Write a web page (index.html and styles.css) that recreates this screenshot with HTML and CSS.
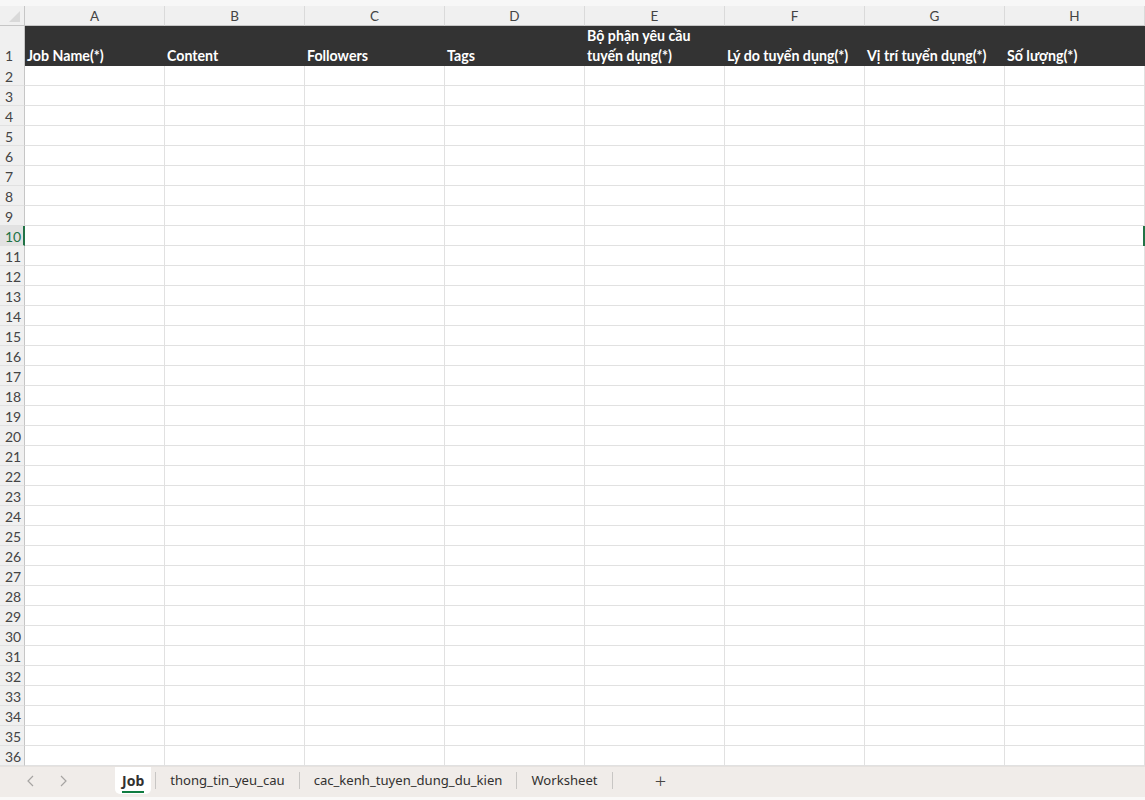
FILE: index.html
```html
<!DOCTYPE html>
<html lang="vi">
<head>
    <meta charset="UTF-8">
    <title>Job</title>
    <link rel="stylesheet" href="styles.css">
</head>
<body>
    <div class="sheet">
        <div class="top-strip"></div>
        <div class="grid" id="grid">
            <div class="corner"><span class="corner-tri"></span></div>
            <div class="col-head">A</div>
            <div class="col-head">B</div>
            <div class="col-head">C</div>
            <div class="col-head">D</div>
            <div class="col-head">E</div>
            <div class="col-head">F</div>
            <div class="col-head">G</div>
            <div class="col-head">H</div>

            <div class="row-head row-head-tall">1</div>
            <div class="head-cell">Job Name(*)</div>
            <div class="head-cell">Content</div>
            <div class="head-cell">Followers</div>
            <div class="head-cell">Tags</div>
            <div class="head-cell">Bộ phận yêu cầu<br>tuyến dụng(*)</div>
            <div class="head-cell">Lý do tuyển dụng(*)</div>
            <div class="head-cell">Vị trí tuyển dụng(*)</div>
            <div class="head-cell">Số lượng(*)</div>
        </div>
    </div>

    <div class="tab-bar">
        <div class="tab-nav">
            <svg width="10" height="12" viewBox="0 0 10 12"><path d="M7 1 L2 6 L7 11" fill="none" stroke="#a6a4a2" stroke-width="1.2"/></svg>
            <svg width="10" height="12" viewBox="0 0 10 12"><path d="M3 1 L8 6 L3 11" fill="none" stroke="#a6a4a2" stroke-width="1.2"/></svg>
        </div>
        <div class="tabs">
            <div class="tab active"><span>Job</span></div>
            <span class="tab-sep"></span>
            <div class="tab">thong_tin_yeu_cau</div>
            <span class="tab-sep"></span>
            <div class="tab">cac_kenh_tuyen_dung_du_kien</div>
            <span class="tab-sep"></span>
            <div class="tab">Worksheet</div>
            <span class="tab-sep"></span>
            <div class="tab-add">+</div>
        </div>
    </div>

    <script>
        // rows 2..36 of the empty sheet
        const grid = document.getElementById('grid');
        let html = '';
        for (let r = 2; r <= 36; r++) {
            const sel = r === 10;
            html += `<div class="row-head${sel ? ' selected' : ''}">${r}</div>`;
            for (let c = 0; c < 8; c++) {
                html += `<div class="cell${sel && c === 7 ? ' edge-mark' : ''}"></div>`;
            }
        }
        grid.insertAdjacentHTML('beforeend', html);
    </script>
</body>
</html>
```

FILE: styles.css
```css
:root {
  --grid-line: #e1e1e1;
  --head-bg: #f0f0f0;
  --head-line: #c6c6c6;
  --dark: #333333;
  --green: #217346;
  --tab-bg: #f0ece9;
}

html, body {
  margin: 0;
  height: 100%;
  overflow: hidden;
  background: #fff;
}

body {
  font-family: Lato, "Liberation Sans", sans-serif;
  width: 1145px;
  height: 800px;
  display: flex;
  flex-direction: column;
}

.sheet {
  height: 766px;
  overflow: hidden;
}

.top-strip {
  height: 6px;
  background: #f7f7f7;
}

.grid {
  display: grid;
  grid-template-columns: 25px repeat(8, 140px);
  grid-auto-rows: 20px;
}

.corner,
.col-head {
  height: 20px;
  background: var(--head-bg);
  border-bottom: 1px solid var(--head-line);
  box-sizing: border-box;
}

.corner {
  position: relative;
  border-right: 1px solid var(--head-line);
}

.corner-tri {
  position: absolute;
  right: 4px;
  bottom: 3px;
  width: 0;
  height: 0;
  border-left: 11px solid transparent;
  border-bottom: 11px solid #d9d9d9;
}

.col-head {
  border-right: 1px solid #dadada;
  color: #444;
  font-size: 13.5px;
  line-height: 20px;
  text-align: center;
}

.row-head {
  background: var(--head-bg);
  border-right: 1px solid var(--head-line);
  border-bottom: 1px solid var(--grid-line);
  box-sizing: border-box;
  color: #444;
  font-size: 14px;
  line-height: 21px;
  padding-left: 5px;
}

.row-head-tall {
  grid-row: span 2;
  display: flex;
  align-items: flex-end;
  line-height: 20px;
  border-bottom: none;
}

.row-head.selected {
  background: #e2e2e2;
  color: var(--green);
  border-right: 2px solid var(--green);
}

.head-cell {
  grid-row: span 2;
  background: var(--dark);
  color: #fff;
  font-weight: bold;
  font-size: 14.2px;
  line-height: 20px;
  padding: 0 2px;
  display: flex;
  align-items: flex-end;
  white-space: nowrap;
}

.cell {
  border-right: 1px solid var(--grid-line);
  border-bottom: 1px solid var(--grid-line);
  box-sizing: border-box;
}

.cell.edge-mark {
  position: relative;
}

.cell.edge-mark::after {
  content: "";
  position: absolute;
  right: -1px;
  top: 0;
  width: 2px;
  height: 20px;
  background: var(--green);
}

/* sheet tabs */
.tab-bar {
  flex: 1;
  background: var(--tab-bg);
  border-top: 1px solid #e6e2df;
  box-sizing: border-box;
  display: flex;
  align-items: flex-start;
  font-family: "Noto Sans", "Open Sans", sans-serif;
  font-size: 13.1px;
  color: #323130;
  position: relative;
}

.tab-bar::after {
  content: "";
  position: absolute;
  left: 0;
  right: 0;
  bottom: 0;
  height: 3px;
  background: #faf9f8;
}

.tab-nav {
  width: 115px;
  height: 27px;
  display: flex;
  align-items: center;
  gap: 22px;
  padding-left: 26px;
  box-sizing: border-box;
}

.tabs {
  display: flex;
  align-items: center;
  height: 27px;
}

.tab {
  padding: 0 14px;
  line-height: 27px;
  white-space: nowrap;
}

.tab.active {
  background: #fff;
  padding: 0 7px;
  border-radius: 0 0 5px 5px;
  font-weight: bold;
  font-size: 14px;
  position: relative;
}

.tab.active span {
  display: inline-block;
  border-bottom: 2px solid #107c41;
  line-height: 20px;
  padding-top: 1px;
}

.tab.active + .tab-sep {
  margin-left: 4px;
}

.tab-sep {
  width: 1px;
  height: 17px;
  background: #c8c6c4;
}

.tab-add {
  width: 96px;
  text-align: center;
  font-size: 20px;
  font-weight: 300;
  line-height: 27px;
  color: #484644;
}
```
